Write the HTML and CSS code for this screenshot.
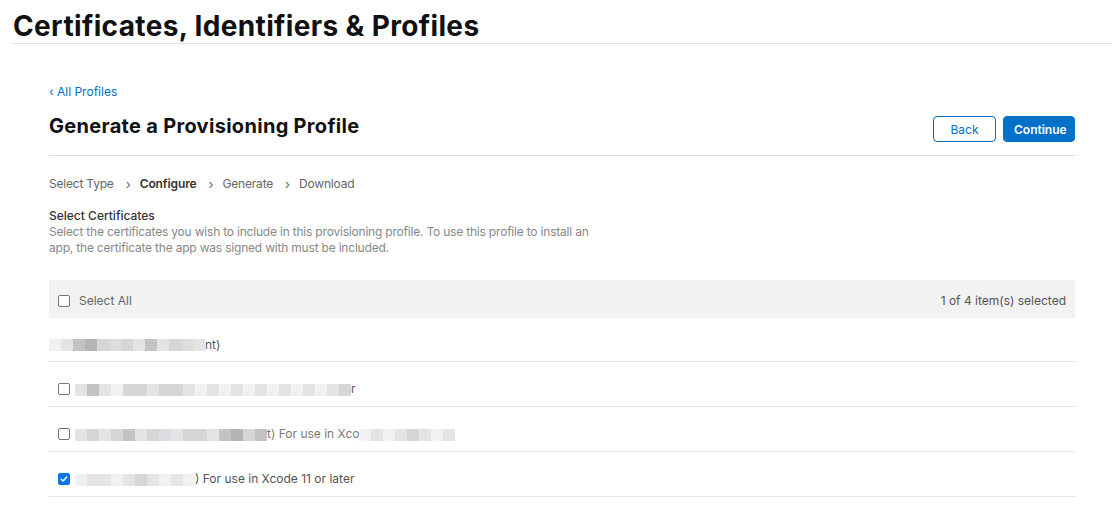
FILE: index.html
```html
<!DOCTYPE html>
<html>
<head>
<meta charset="utf-8">
<link rel="stylesheet" href="styles.css">
</head>
<body>
<header class="top">
  <h1 class="site-title">Certificates, Identifiers &amp; Profiles</h1>
</header>
<main class="main">
  <a class="back-link" href="#">‹ All Profiles</a>
  <div class="page-head">
    <h2 class="page-title">Generate a Provisioning Profile</h2>
    <div class="actions">
      <button class="btn btn-outline">Back</button>
      <button class="btn btn-primary">Continue</button>
    </div>
  </div>
  <nav class="steps">
    <span>Select Type</span><span class="chev">›</span>
    <span class="current">Configure</span><span class="chev">›</span>
    <span>Generate</span><span class="chev">›</span>
    <span>Download</span>
  </nav>
  <section class="intro">
    <div class="intro-title">Select Certificates</div>
    <p class="intro-text">Select the certificates you wish to include in this provisioning profile. To use this profile to install an app, the certificate the app was signed with must be included.</p>
  </section>
  <div class="table">
    <div class="thead">
      <label class="sel-all"><span class="cb"></span>Select All</label>
      <span class="count">1 of 4 item(s) selected</span>
    </div>
    <div class="row row-first">
      <span class="blur">
        <i class="c1"></i><i class="c2"></i><i class="c4"></i><i class="c5"></i><i class="c3"></i><i class="c6"></i><i class="c3"></i><i class="c2"></i><i class="c4"></i><i class="c2"></i><i class="c3"></i><i class="c6"></i><i class="c2"></i>
      </span><span class="txt">nt)</span>
    </div>
    <div class="row">
      <span class="cb"></span>
      <span class="blur">
        <i class="c2"></i><i class="c4"></i><i class="c2"></i><i class="c1"></i><i class="c3"></i><i class="c3"></i><i class="c2"></i><i class="c3"></i><i class="c3"></i><i class="c2"></i><i class="c1"></i><i class="c2"></i><i class="c1"></i><i class="c2"></i><i class="c1"></i><i class="c2"></i><i class="c1"></i><i class="c2"></i><i class="c1"></i><i class="c2"></i><i class="c1"></i><i class="c2"></i><i class="c3"></i>
      </span><span class="txt">r</span>
    </div>
    <div class="row">
      <span class="cb"></span>
      <span class="blur">
        <i class="c2"></i><i class="c3"></i><i class="c2"></i><i class="c3"></i><i class="c4"></i><i class="c2"></i><i class="c3"></i><i class="c6"></i><i class="c2"></i><i class="c3"></i><i class="c3"></i><i class="c2"></i><i class="c4"></i><i class="c5"></i><i class="c3"></i><i class="c4"></i>
      </span><span class="txt faded">t) For use in Xco</span><span class="blur">
        <i class="c1"></i><i class="c2"></i><i class="c1"></i><i class="c2"></i><i class="c3"></i><i class="c2"></i><i class="c1"></i><i class="c2"></i>
      </span>
    </div>
    <div class="row">
      <span class="cb checked"><svg viewBox="0 0 12 12" width="12" height="12"><path d="M2.8 6.2 5 8.4 9.3 3.6" fill="none" stroke="#fff" stroke-width="1.8" stroke-linecap="round" stroke-linejoin="round"/></svg></span>
      <span class="blur">
        <i class="c1"></i><i class="c2"></i><i class="c2"></i><i class="c1"></i><i class="c2"></i><i class="c3"></i><i class="c2"></i><i class="c1"></i><i class="c2"></i><i class="c1"></i>
      </span><span class="txt">) For use in Xcode 11 or later</span>
    </div>
  </div>
</main>
</body>
</html>
```
FILE: styles.css
```css
* { box-sizing: border-box; }
body {
  margin: 0;
  background: #fff;
  font-family: Inter, "Liberation Sans", Arial, sans-serif;
  color: #1d1d1f;
}
.top {
  margin-left: 13px;
  border-bottom: 1px solid #e1e1e1;
  height: 44px;
}
.site-title {
  margin: 0;
  padding-top: 10px;
  font-size: 28px;
  line-height: 32px;
  font-weight: 700;
  letter-spacing: 0.35px;
  color: #111;
}
.main {
  margin: 0 37px 0 49px;
  padding-top: 40px;
}
.back-link {
  display: block;
  font-size: 12px;
  line-height: 16px;
  color: #0070c9;
  text-decoration: none;
}
.page-head {
  display: flex;
  align-items: center;
  justify-content: space-between;
  margin-top: 10px;
  padding-bottom: 13px;
  border-bottom: 1px solid #dcdcdc;
}
.page-title {
  margin: 0;
  font-size: 20px;
  line-height: 28px;
  font-weight: 700;
  letter-spacing: 0.3px;
  color: #111;
}
.actions { display: flex; gap: 7px; margin-top: 6px; }
.btn {
  font-family: inherit;
  font-size: 12px;
  height: 26px;
  border-radius: 4px;
  padding: 0 10px;
  cursor: pointer;
}
.btn-outline {
  width: 63px;
  background: #fff;
  border: 1px solid #0070c9;
  color: #0070c9;
}
.btn-primary {
  width: 72px;
  background: #0070c9;
  border: 1px solid #0070c9;
  color: #fff;
  font-weight: 600;
}
.steps {
  display: flex;
  align-items: center;
  margin-top: 20px;
  font-size: 12px;
  line-height: 16px;
  color: #666;
  letter-spacing: -0.2px;
}
.steps .chev { margin: 0 9px 0 12px; font-size: 13px; color: #666; letter-spacing: 0; }
.steps .current { font-weight: 600; color: #333; letter-spacing: -0.1px; }
.intro { margin-top: 16px; font-size: 12px; line-height: 16px; }
.intro-title { color: #333; font-weight: 500; }
.intro-text { margin: 0; color: #888; max-width: 550px; letter-spacing: -0.2px; }
.table { margin-top: 24px; }
.thead {
  display: flex;
  align-items: center;
  justify-content: space-between;
  height: 38px;
  background: #f2f2f2;
  padding: 3px 9px 0 9px;
  font-size: 12px;
  color: #666;
}
.sel-all { display: flex; align-items: center; gap: 9px; }
.count { color: #555; }
.cb {
  display: inline-flex;
  align-items: center;
  justify-content: center;
  width: 12px;
  height: 12px;
  border: 1px solid #777;
  border-radius: 2px;
  background: #fff;
  flex: none;
}
.cb.checked { background: #0a74e6; border-color: #0a74e6; }
.row {
  display: flex;
  align-items: center;
  height: 45px;
  border-bottom: 1px solid #e6e6e6;
  padding: 9px 0 0 9px;
  font-size: 12px;
  color: #666;
}
.row-first { padding-left: 0; height: 44px; }
.row .cb { margin-right: 5px; }
.blur { display: flex; height: 12px; margin-top: 2px; }
.blur i { display: block; width: 12px; height: 12px; }
.c1 { background: #f1f1f1; }
.c2 { background: #e4e4e4; }
.c3 { background: #d6d6d6; }
.c4 { background: #c5c3c2; }
.c5 { background: #b4b4b6; }
.c6 { background: #dcdde1; }
.txt { color: #555; }
.faded { color: #7a7a7a; }
```
